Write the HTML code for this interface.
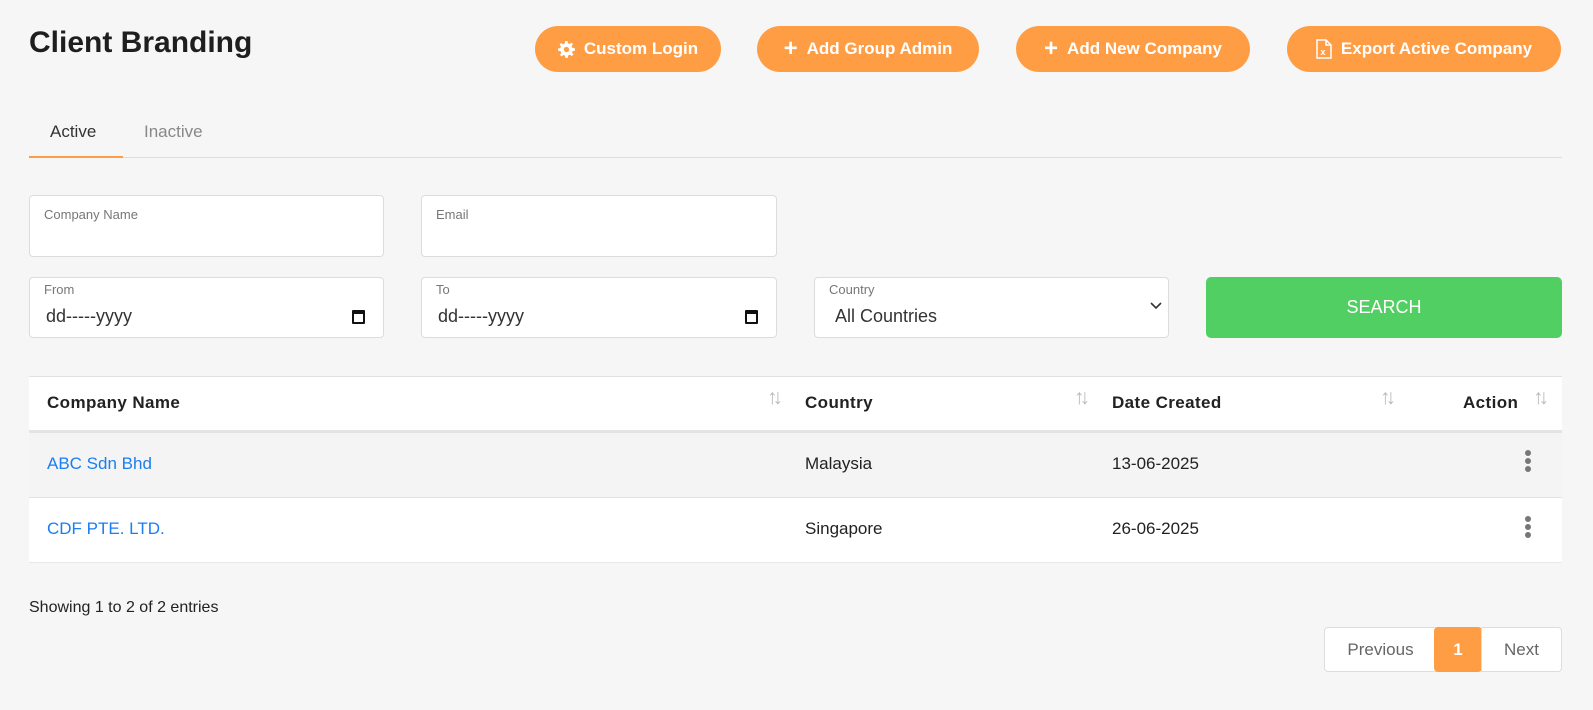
<!DOCTYPE html>
<html><head><meta charset="utf-8"><style>
*{box-sizing:border-box;margin:0;padding:0}
body{width:1593px;height:710px;background:#f6f6f6;font-family:"Liberation Sans",sans-serif;color:#222;position:relative;overflow:hidden}
.abs{position:absolute}
h1{position:absolute;left:29px;top:26px;font-size:30px;font-weight:700;color:#1e1e1e}
.btn{position:absolute;top:26px;height:46px;border-radius:23px;background:#ff9d45;color:#fff;font-weight:700;font-size:17px;display:flex;align-items:center;justify-content:center;gap:9px}
.tab{position:absolute;top:122px;font-size:17px}
.field{position:absolute;background:#fff;border:1px solid #dcdcdc;border-radius:4px}
.field .lb{position:absolute;left:14px;top:11px;font-size:13px;color:#777}
.field .v{position:absolute;left:16px;top:28px;font-size:18px;color:#333}
.cal{position:absolute;right:18px;top:32px;width:13px;height:14px;border:2px solid #111;border-top-width:4px;border-radius:1px}
.th{position:absolute;top:393px;font-size:17px;font-weight:700;color:#222;letter-spacing:0.4px}
.sort{position:absolute;top:386px;font-size:21px;color:#bbb;letter-spacing:-5px}
.td{position:absolute;font-size:17px;color:#222}
.lnk{color:#1a7ef0}
.dots{position:absolute;left:1525px;width:6px}
.dots i{display:block;width:6px;height:6px;border-radius:50%;background:#777;margin-bottom:2px}
.pg{position:absolute;top:627px;height:45px;background:#fff;border:1px solid #ddd;font-size:17px;color:#666;display:flex;align-items:center;justify-content:center}
</style></head><body>
<h1>Client Branding</h1>
<div class="btn" style="left:535px;width:186px"><svg width="17" height="17" viewBox="0 0 16 16"><path fill="#fff" d="M7 0h2l.4 2.2 1.4.6 1.9-1.3 1.4 1.4-1.3 1.9.6 1.4L16 7v2l-2.2.4-.6 1.4 1.3 1.9-1.4 1.4-1.9-1.3-1.4.6L9 16H7l-.4-2.2-1.4-.6-1.9 1.3-1.4-1.4 1.3-1.9-.6-1.4L0 9V7l2.2-.4.6-1.4-1.3-1.9 1.4-1.4 1.9 1.3 1.4-.6z"/><circle cx="8" cy="8" r="2.5" fill="#ff9d45"/></svg>Custom Login</div>
<div class="btn" style="left:757px;width:222px"><span style="font-size:24px;line-height:1">+</span>Add Group Admin</div>
<div class="btn" style="left:1016px;width:234px"><span style="font-size:24px;line-height:1">+</span>Add New Company</div>
<div class="btn" style="left:1287px;width:274px"><svg width="16" height="20" viewBox="0 0 16 20"><path d="M1 1h9l5 5v13H1z M10 1v5h5" fill="none" stroke="#fff" stroke-width="1.5"/><text x="4.5" y="16" fill="#fff" font-size="9" font-family="Liberation Sans">x</text></svg>Export Active Company</div>
<div class="tab" style="left:50px;color:#333">Active</div>
<div class="tab" style="left:144px;color:#888">Inactive</div>
<div class="abs" style="left:29px;top:157px;width:1533px;height:1px;background:#ddd"></div>
<div class="abs" style="left:29px;top:156px;width:94px;height:2px;background:#ff9d45"></div>
<div class="field" style="left:29px;top:195px;width:355px;height:62px"><span class="lb">Company Name</span></div>
<div class="field" style="left:421px;top:195px;width:356px;height:62px"><span class="lb">Email</span></div>
<div class="field" style="left:29px;top:277px;width:355px;height:61px"><span class="lb" style="top:4px">From</span><span class="v">dd-----yyyy</span><span class="cal"></span></div>
<div class="field" style="left:421px;top:277px;width:356px;height:61px"><span class="lb" style="top:4px">To</span><span class="v">dd-----yyyy</span><span class="cal"></span></div>
<div class="field" style="left:814px;top:277px;width:355px;height:61px"><span class="lb" style="top:4px">Country</span><span class="v" style="left:20px">All Countries</span><svg class="abs" style="right:6px;top:24px" width="12" height="8" viewBox="0 0 12 8"><path d="M1 1l5 5 5-5" fill="none" stroke="#333" stroke-width="1.6"/></svg></div>
<div class="abs" style="left:1206px;top:277px;width:356px;height:61px;background:#52cf63;border-radius:5px;color:#fff;font-size:18px;display:flex;align-items:center;justify-content:center">SEARCH</div>
<div class="abs" style="left:29px;top:376px;width:1533px;height:54px;background:#fff;border-top:1px solid #e2e2e2"></div>
<div class="abs" style="left:29px;top:430px;width:1533px;height:3px;background:#e2e4e6"></div>
<div class="abs" style="left:29px;top:433px;width:1533px;height:64px;background:#f4f4f4"></div>
<div class="abs" style="left:29px;top:497px;width:1533px;height:1px;background:#e2e2e2"></div>
<div class="abs" style="left:29px;top:498px;width:1533px;height:65px;background:#fff;border-bottom:1px solid #e8e8e8"></div>
<div class="th" style="left:47px">Company Name</div>
<div class="th" style="left:805px">Country</div>
<div class="th" style="left:1112px">Date Created</div>
<div class="th" style="left:1463px">Action</div>
<div class="sort" style="left:767px">↑↓</div>
<div class="sort" style="left:1074px">↑↓</div>
<div class="sort" style="left:1380px">↑↓</div>
<div class="sort" style="left:1533px">↑↓</div>
<div class="td lnk" style="left:47px;top:454px">ABC Sdn Bhd</div>
<div class="td" style="left:805px;top:454px">Malaysia</div>
<div class="td" style="left:1112px;top:454px">13-06-2025</div>
<div class="dots" style="top:450px"><i></i><i></i><i></i></div>
<div class="td lnk" style="left:47px;top:519px">CDF PTE. LTD.</div>
<div class="td" style="left:805px;top:519px">Singapore</div>
<div class="td" style="left:1112px;top:519px">26-06-2025</div>
<div class="dots" style="top:516px"><i></i><i></i><i></i></div>
<div class="td" style="left:29px;top:599px;font-size:16px">Showing 1 to 2 of 2 entries</div>
<div class="pg" style="left:1324px;width:113px;border-radius:4px 0 0 4px">Previous</div>
<div class="pg" style="left:1434px;width:48px;background:#ff9d45;border-color:#ff9d45;color:#fff;border-radius:4px;font-weight:700">1</div>
<div class="pg" style="left:1481px;width:81px;border-radius:0 4px 4px 0">Next</div>
</body></html>
